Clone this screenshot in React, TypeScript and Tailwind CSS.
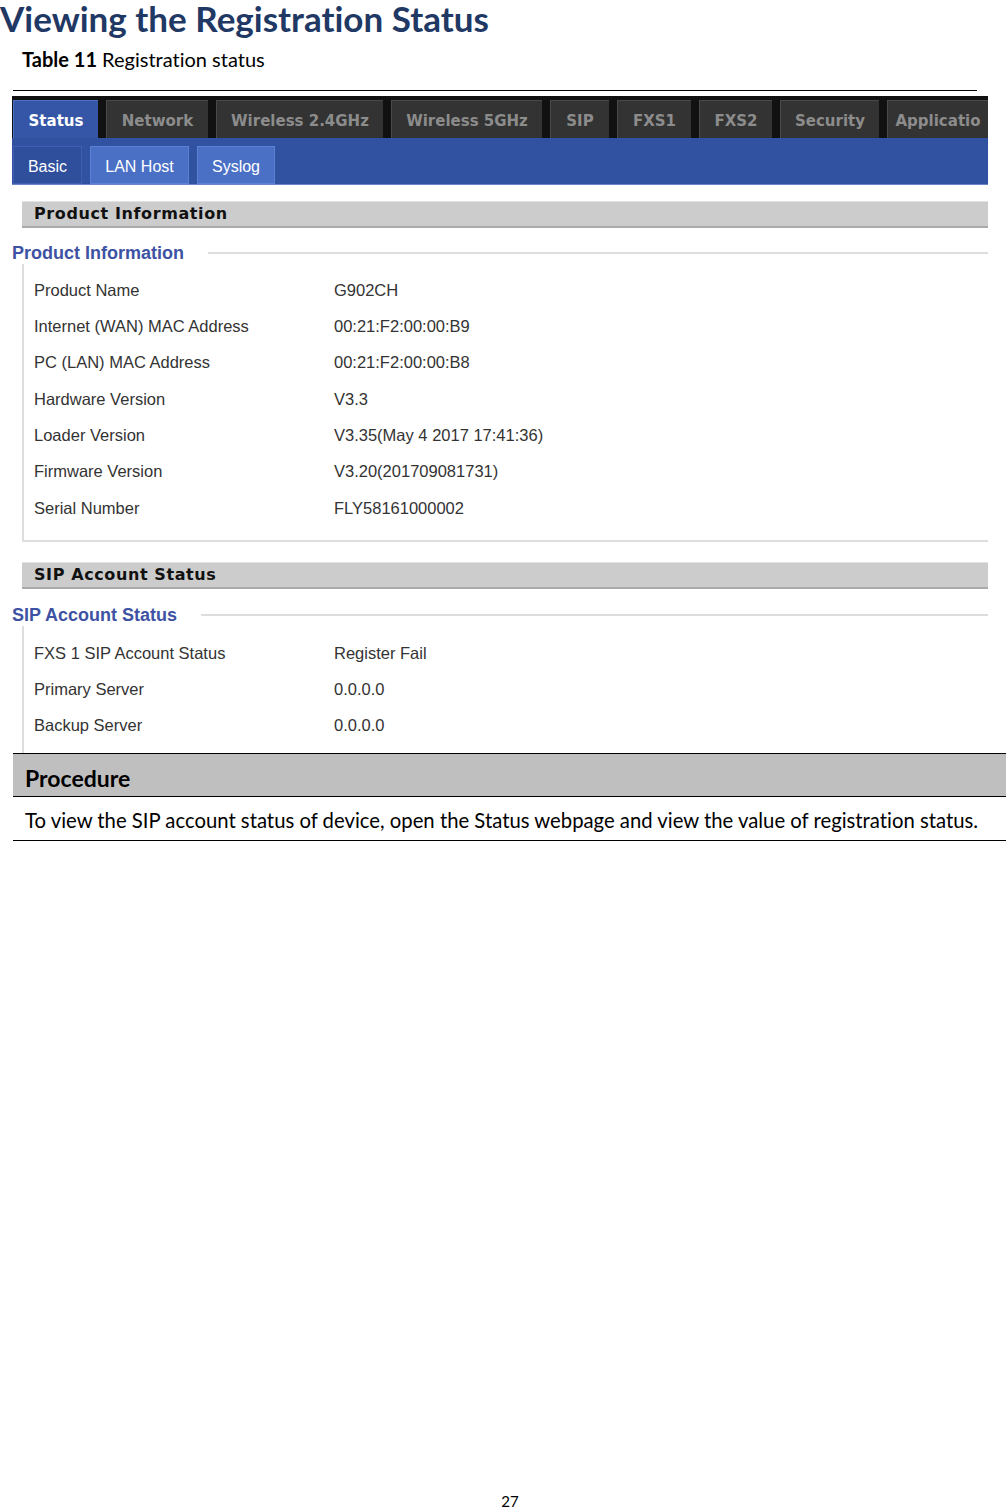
import React from 'react';

const doc = { fontFamily: 'Lato, "Open Sans", sans-serif' };
const verdana = { fontFamily: '"DejaVu Sans", Verdana, sans-serif' };
const tahoma = { fontFamily: '"Liberation Sans", Tahoma, Arial, sans-serif' };

const tabs = [
  { label: 'Status', w: 'w-[85px]', active: true },
  { label: 'Network', w: 'w-[102px]' },
  { label: 'Wireless 2.4GHz', w: 'w-[167px]' },
  { label: 'Wireless 5GHz', w: 'w-[151px]' },
  { label: 'SIP', w: 'w-[59px]' },
  { label: 'FXS1', w: 'w-[74px]' },
  { label: 'FXS2', w: 'w-[73px]' },
  { label: 'Security', w: 'w-[99px]' },
  { label: 'Applicatio', w: 'w-[101px]' },
];

const subTabs = [
  { label: 'Basic', w: 'w-[69px]', active: true },
  { label: 'LAN Host', w: 'w-[99px]' },
  { label: 'Syslog', w: 'w-[78px]' },
];

const productRows = [
  ['Product Name', 'G902CH'],
  ['Internet (WAN) MAC Address', '00:21:F2:00:00:B9'],
  ['PC (LAN) MAC Address', '00:21:F2:00:00:B8'],
  ['Hardware Version', 'V3.3'],
  ['Loader Version', 'V3.35(May 4 2017 17:41:36)'],
  ['Firmware Version', 'V3.20(201709081731)'],
  ['Serial Number', 'FLY58161000002'],
];

const sipRows = [
  ['FXS 1 SIP Account Status', 'Register Fail'],
  ['Primary Server', '0.0.0.0'],
  ['Backup Server', '0.0.0.0'],
];

function SectionBar({ title }: { title: string }) {
  return (
    <div className="ml-[10px] h-[27px] bg-[#cccccc] border-t border-t-[#e2e2e2] border-b-2 border-b-[#aaaaaa] flex items-center pl-[12px]">
      <span className="text-[16px] font-bold text-[#111] tracking-[0.6px]" style={verdana}>
        {title}
      </span>
    </div>
  );
}

function Legend({ title }: { title: string }) {
  return (
    <div className="flex items-center h-[22px]">
      <span className="text-[18px] font-bold text-[#3d52a3] shrink-0 mr-[24px]" style={tahoma}>
        {title}
      </span>
      <div className="flex-1 h-[2px] bg-[#dddddd]" />
    </div>
  );
}

function Rows({ rows }: { rows: string[][] }) {
  return (
    <div>
      {rows.map(([k, v]) => (
        <div key={k} className="h-[36.3px] flex items-center text-[16.5px] text-[#333]" style={tahoma}>
          <span className="w-[310px] pl-[10px]">{k}</span>
          <span>{v}</span>
        </div>
      ))}
    </div>
  );
}

export default function App() {
  return (
    <div
      className="w-[1006px] h-[1510px] bg-white relative overflow-hidden [font-variant-ligatures:none]"
      style={doc}
    >
      <h1 className="text-[35px] font-bold text-[#1f3864] leading-[36px]">
        Viewing the Registration Status
      </h1>
      <p className="mt-[11px] ml-[22px] text-[20px] text-black leading-[24px]">
        <span className="font-bold">Table 11</span> Registration status
      </p>
      <div className="ml-[13px] w-[964px] mt-[19px] h-px bg-black" />

      {/* screenshot */}
      <div className="ml-[12px] w-[976px] mt-[5px]">
        <div className="bg-[#111111] pt-[4px] pl-[1px] flex gap-[8px] overflow-hidden h-[42px]" style={verdana}>
          {tabs.map((t) => (
            <div
              key={t.label}
              className={`${t.w} shrink-0 h-[38px] pt-[3px] flex items-center justify-center text-[15px] font-bold border-t border-l whitespace-nowrap ${
                t.active
                  ? 'bg-[#3556a6] border-[#4d70c4] text-white'
                  : 'bg-[#333333] border-[#4a4a4a] text-[#8c8c8c]'
              }`}
            >
              {t.label}
            </div>
          ))}
        </div>
        <div className="bg-[#3152a0] h-[47px] pl-[1px] pt-[8px] flex gap-[8px] border-b border-b-[#6a86c8]" style={tahoma}>
          {subTabs.map((t) => (
            <div
              key={t.label}
              className={`${t.w} h-[38px] pt-[3px] flex items-center justify-center text-[16px] text-white border ${
                t.active ? 'bg-[#2f4e9c] border-[#3f60b2]' : 'bg-[#4a70c6] border-[#5b80d4]'
              }`}
            >
              {t.label}
            </div>
          ))}
        </div>

        <div className="mt-[16px]">
          <SectionBar title="Product Information" />
        </div>
        <div className="mt-[14px]">
          <Legend title="Product Information" />
        </div>
        <div className="ml-[10px] border-l-2 border-b-2 border-[#dddddd] pt-[8px] pb-[14px]">
          <Rows rows={productRows} />
        </div>

        <div className="mt-[20px]">
          <SectionBar title="SIP Account Status" />
        </div>
        <div className="mt-[15px]">
          <Legend title="SIP Account Status" />
        </div>
        <div className="ml-[10px] border-l-2 border-[#dddddd] pt-[9px] pb-[9px]">
          <Rows rows={sipRows} />
        </div>
      </div>

      {/* procedure table */}
      <div className="ml-[13px] w-[993px] border-t border-black">
        <div className="h-[43px] bg-[#bfbfbf] border-b border-black flex items-center pl-[12px] pt-[7px]">
          <span className="text-[23px] font-bold text-black">Procedure</span>
        </div>
        <div className="h-[44px] border-b border-black flex items-center pl-[12px] pt-[3px]">
          <span className="text-[20.3px] text-black whitespace-nowrap">
            To view the SIP account status of device, open the Status webpage and view the value of registration status.
          </span>
        </div>
      </div>

      <div className="absolute left-0 right-0 top-[1494px] text-center text-[15px] leading-[15px] text-black pl-[14px]">
        27
      </div>
    </div>
  );
}
